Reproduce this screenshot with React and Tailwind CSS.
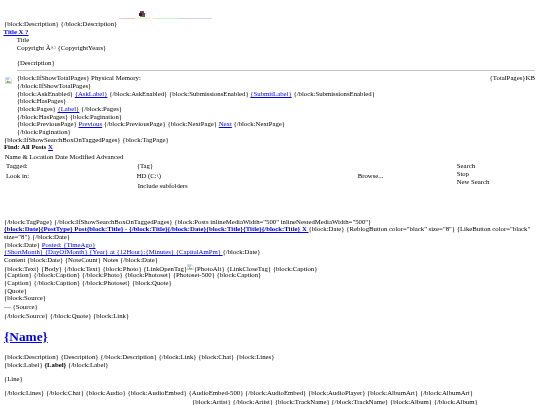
const L = ({ children, className = "" }) => <a href="#" className={`text-[#0000ee] underline ${className}`}>{children}</a>;

const Row = ({ h = "h-[7.67px]", className = "", children }) => (
  <div className={`${h} leading-[7.67px] whitespace-nowrap ${className}`}>{children}</div>
);

const BrokenImage = ({ className = "" }) => (
  <svg viewBox="0 0 16 16" className={className}>
    <path d="M1 1h10l4 4v10H1z" fill="#fff" stroke="#a9a9a9" />
    <path d="M2 13l4-5 3 3 2-2 3 4z" fill="#6aa84f" />
    <path d="M2 2h8v5H2z" fill="#b8d0f0" />
  </svg>
);

const Logo = () => (
  <svg viewBox="0 0 8 7" className="absolute left-[138px] top-0 h-[7px] w-[8px]">
    <rect x="2" y="0" width="4" height="2" fill="#7a3a5a" />
    <rect x="1" y="2" width="3" height="3" fill="#1f1f3a" />
    <rect x="4" y="2" width="3" height="2" fill="#a02a4a" />
    <rect x="4" y="4" width="3" height="2" fill="#2d7d46" />
    <rect x="2" y="5" width="2" height="1" fill="#8a8a40" />
  </svg>
);

export default function App() {
  return (
    <div className="w-[540px] h-[405px] overflow-hidden bg-white text-black text-[6.75px] font-['Liberation_Serif',serif] pt-[11px] blur-[0.3px]">
      <div className="relative h-[9px]">
        <div className="absolute left-[119px] top-[7px] flex h-[1px] w-[93px]">
          <div className="w-[16px] bg-[#f3c6c0]" />
          <div className="w-[20px] bg-[#f8f3cc]" />
          <div className="w-[24px] bg-[#cdf0cd]" />
          <div className="w-[33px] bg-[#d0d0f2]" />
        </div>
        <Logo />
      </div>

      <Row className="pl-[4px]">{"{block:Description} {/block:Description}"}</Row>
      <Row className="pl-[3.5px]"><L className="font-bold">Title X ?</L></Row>

      <div className="pl-[16.7px] pt-[0.8px]">
        <Row>Title</Row>
        <Row>{"Copyright Ã© {CopyrightYears}"}</Row>
        <Row className="mt-[7.67px]">{"{Description}"}</Row>
        <div className="mt-[3.5px] mr-[5px] h-[1px] bg-[#c4c4c4]" />
      </div>

      <div className="flex pt-[3.2px] pr-[5px]">
        <div className="w-[16.7px] pl-[5px] pt-[3px] shrink-0">
          <BrokenImage className="h-[7px] w-[7px]" />
        </div>
        <div className="flex-1">
          <Row className="flex justify-between">
            <span>{"{block:IfShowTotalPages} Physical Memory:"}</span>
            <span>{"{TotalPages}KB"}</span>
          </Row>
          <Row>{"{/block:IfShowTotalPages}"}</Row>
          <Row>
            {"{block:AskEnabled} "}<L>{"{AskLabel}"}</L>{" {/block:AskEnabled} {block:SubmissionsEnabled} "}<L>{"{SubmitLabel}"}</L>{" {/block:SubmissionsEnabled}"}
          </Row>
          <Row>{"{block:HasPages}"}</Row>
          <Row>{"{block:Pages} "}<L>{"{Label}"}</L>{" {/block:Pages}"}</Row>
          <Row>{"{/block:HasPages} {block:Pagination}"}</Row>
          <Row>
            {"{block:PreviousPage} "}<L>Previous</L>{" {/block:PreviousPage} {block:NextPage} "}<L>Next</L>{" {/block:NextPage}"}
          </Row>
          <Row>{"{/block:Pagination}"}</Row>
        </div>
      </div>

      <div className="pl-[4px]">
        <Row>{"{block:IfShowSearchBoxOnTaggedPages} {block:TagPage}"}</Row>
        <Row className="font-bold">Find: All Posts <L>X</L></Row>
        <Row className="mt-[1.7px] pl-[0.7px]">{"Name & Location Date Modified Advanced"}</Row>

        <div className="flex">
          <div className="w-[132.7px] pl-[2px] shrink-0">
            <Row h="h-[10.3px]" className="pt-[1.3px]">Tagged:</Row>
            <Row h="h-[10.3px]" className="pt-[1.3px]">Look in:</Row>
          </div>
          <div className="w-[221px] shrink-0">
            <Row h="h-[10.3px]" className="pt-[1.3px]">{"{Tag}"}</Row>
            <Row h="h-[10.3px]" className="pt-[1.3px]">{"HD (C:\\)"}</Row>
            <Row h="h-[10.3px]" className="pt-[1.3px] pl-[1px]">Include subfolders</Row>
          </div>
          <div className="w-[99px] shrink-0 pt-[11.6px] leading-[7.67px]">Browse...</div>
          <div className="pt-[2px]">
            <Row>Search</Row>
            <Row>Stop</Row>
            <Row>New Search</Row>
          </div>
        </div>
      </div>

      <div className="pl-[4px] pt-[26.5px]">
        <Row>{"{/block:TagPage} {/block:IfShowSearchBoxOnTaggedPages} {block:Posts inlineMediaWidth=\"500\" inlineNestedMediaWidth=\"500\"}"}</Row>
        <Row>
          <L className="font-bold">{"{block:Date}{PostType} Post{block:Title} - {/block:Title}{/block:Date}{block:Title}{Title}{/block:Title} X "}</L>
          {" {block:Date} {ReblogButton color=\"black\" size=\"8\"} {LikeButton color=\"black\""}
        </Row>
        <Row>{"size=\"8\"} {/block:Date}"}</Row>
        <Row>{"{block:Date} "}<L>{"Posted: {TimeAgo} "}</L></Row>
        <Row><L>{"{ShortMonth} {DayOfMonth} {Year} at {12Hour}:{Minutes} {CapitalAmPm} "}</L>{" {/block:Date}"}</Row>
        <Row>{"Content {block:Date} {NoteCount} Notes {/block:Date}"}</Row>
        <Row>
          {"{block:Text} {Body} {/block:Text} {block:Photo} {LinkOpenTag}"}
          <BrokenImage className="inline h-[6.67px] w-[6.67px] align-baseline" />
          {"{PhotoAlt} {LinkCloseTag} {block:Caption}"}
        </Row>
        <Row>{"{Caption} {/block:Caption} {/block:Photo} {block:Photoset} {Photoset-500} {block:Caption}"}</Row>
        <Row>{"{Caption} {/block:Caption} {/block:Photoset} {block:Quote}"}</Row>
        <Row>{"{Quote}"}</Row>
        <Row>{"{block:Source}"}</Row>
        <Row className="mt-[1px]">{"— {Source}"}</Row>
        <Row className="mt-[1px]">{"{/block:Source} {/block:Quote} {block:Link}"}</Row>

        <h1 className="mt-[9.5px] h-[15.3px] text-[13.33px] leading-[15.3px] font-bold whitespace-nowrap">
          <L>{"{Name}"}</L>
        </h1>

        <Row className="mt-[9.1px]">{"{block:Description} {Description} {/block:Description} {/block:Link} {block:Chat} {block:Lines}"}</Row>
        <Row>{"{block:Label} "}<b>{"{Label}"}</b>{" {/block:Label}"}</Row>
        <Row className="mt-[6.7px]">{"{Line}"}</Row>
        <Row className="mt-[6.3px]">{"{/block:Lines} {/block:Chat} {block:Audio} {block:AudioEmbed} {AudioEmbed-500} {/block:AudioEmbed} {block:AudioPlayer} {block:AlbumArt} {/block:AlbumArt}"}</Row>
        <Row className="pl-[188px] mt-[1.3px]">{"{block:Artist} {/block:Artist} {block:TrackName} {/block:TrackName} {block:Album} {/block:Album}"}</Row>
      </div>
    </div>
  );
}
